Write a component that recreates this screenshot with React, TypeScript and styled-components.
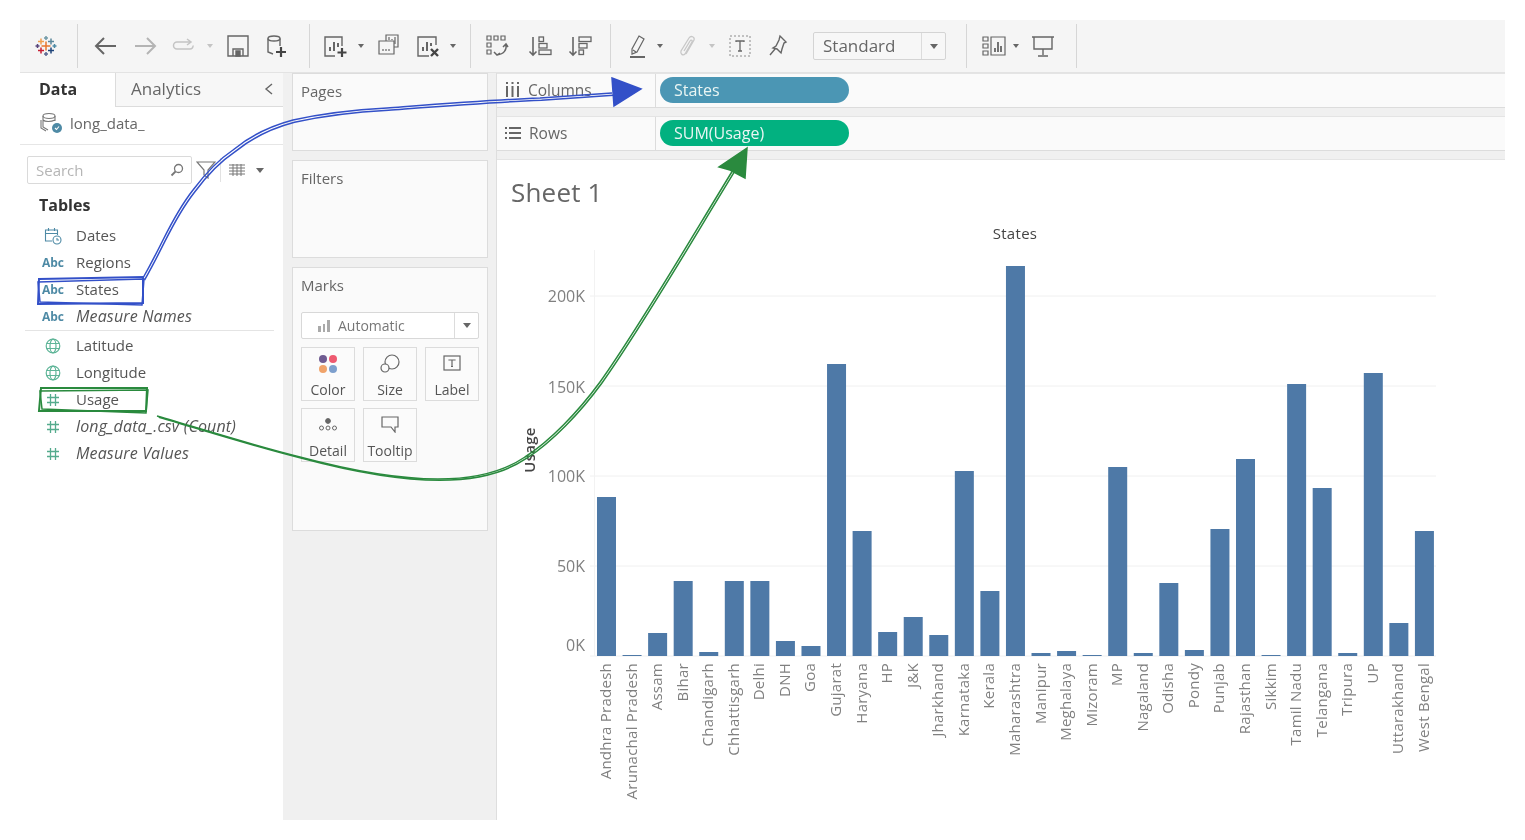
import React from "react";
import styled, { createGlobalStyle } from "styled-components";

const GlobalStyle = createGlobalStyle`
  html, body {
    margin: 0;
    padding: 0;
    background: #ffffff;
    font-family: "Open Sans", "Liberation Sans", sans-serif;
    color: #555555;
  }
`;

const Page = styled.div`
  position: relative;
  width: 1525px;
  height: 840px;
  padding: 20px;
  box-sizing: border-box;
  overflow: hidden;
  filter: blur(0.35px);
`;

const Toolbar = styled.div`
  display: flex;
  align-items: center;
  height: 53px;
  background: #f5f5f5;
  border-bottom: 1px solid #e3e3e3;
  box-sizing: border-box;
`;

const ToolGroup = styled.div<{ $w: number }>`
  display: flex;
  align-items: center;
  width: ${(p) => p.$w}px;
  height: 44px;
  border-right: 1px solid #d6d6d6;
  box-sizing: content-box;
`;

const ToolIcon = styled.svg<{ $ml: number }>`
  flex: none;
  width: 24px;
  height: 24px;
  margin-left: ${(p) => p.$ml}px;
`;

const Caret = styled.span<{ $ml: number; $light?: boolean; $big?: boolean }>`
  flex: none;
  width: 0;
  height: 0;
  margin-left: ${(p) => p.$ml}px;
  border-left: ${(p) => (p.$big ? 4.5 : 3)}px solid transparent;
  border-right: ${(p) => (p.$big ? 4.5 : 3)}px solid transparent;
  border-top: ${(p) => (p.$big ? 5 : 4)}px solid ${(p) => (p.$light ? "#c4c4c4" : "#666666")};
`;

const FitSelect = styled.div`
  display: flex;
  align-items: center;
  width: 133px;
  height: 28px;
  margin-left: 23px;
  background: #f7f7f7;
  border: 1px solid #d4d4d4;
  border-radius: 2px;
  box-sizing: border-box;
  font-size: 17px;
  color: #666666;
`;

const FitLabel = styled.span`
  flex: 1;
  padding: 0 0 2px 9px;
`;

const FitButton = styled.span`
  display: flex;
  align-items: center;
  justify-content: center;
  width: 23px;
  height: 100%;
  border-left: 1px solid #dcdcdc;
`;

const Workspace = styled.div`
  display: grid;
  grid-template-columns: 263px 214px 1fr;
  height: 747px;
`;

const DataPane = styled.div`
  background: #ffffff;
  display: flex;
  flex-direction: column;
`;

const TabRow = styled.div`
  display: flex;
  height: 34px;
`;

const Tab = styled.div<{ $active?: boolean }>`
  display: flex;
  align-items: center;
  box-sizing: border-box;
  padding-bottom: 2px;
  ${(p) =>
    p.$active
      ? `width: 95px; padding-left: 19px; font-size: 16px; font-weight: 700; color: #333333;`
      : `flex: 1; padding-left: 15px; padding-right: 9px; font-size: 17px; justify-content: space-between; background: #f7f7f7; color: #666666; border-left: 1px solid #dcdcdc; border-bottom: 1px solid #dcdcdc;`}
`;

const SourceRow = styled.div`
  display: flex;
  align-items: center;
  gap: 7px;
  height: 38px;
  padding: 0 0 6px 20px;
  box-sizing: border-box;
  font-size: 15px;
  color: #666666;
  border-bottom: 1px solid #e6e6e6;
`;

const SearchRow = styled.div`
  display: flex;
  align-items: center;
  height: 28px;
  margin-top: 11px;
  padding-left: 7px;
`;

const SearchBox = styled.div`
  display: flex;
  align-items: center;
  justify-content: space-between;
  width: 165px;
  height: 28px;
  padding: 0 7px 0 8px;
  border: 1px solid #dadada;
  border-radius: 2px;
  box-sizing: border-box;
  font-size: 15px;
  color: #b5b5b5;
`;

const RowDivider = styled.span`
  width: 1px;
  height: 24px;
  margin-left: 4px;
  background: #e2e2e2;
`;

const TablesTitle = styled.div`
  margin: 8px 0 3px 19px;
  font-size: 16px;
  line-height: 26px;
  font-weight: 700;
  color: #333333;
`;

const FieldList = styled.div`
  display: flex;
  flex-direction: column;
`;

const FieldRow = styled.div`
  display: flex;
  align-items: center;
  height: 27px;
  font-size: 15px;
  color: #555555;
`;

const FieldBadge = styled.span`
  display: flex;
  align-items: center;
  justify-content: center;
  flex: none;
  width: 24px;
  margin: 0 11px 0 21px;
  padding-top: 2px;
  font-size: 12px;
  font-weight: 700;
  color: #4e8aa5;
`;

const FieldName = styled.span<{ $calc?: boolean }>`
  ${(p) => p.$calc && `font-style: italic; font-size: 16px; letter-spacing: 0.15px;`}
`;

const FieldDivider = styled.div`
  height: 1px;
  margin: 1px 9px 0 5px;
  background: #e4e4e4;
`;

const CardColumn = styled.div`
  display: flex;
  flex-direction: column;
  gap: 9px;
  padding: 0 8px 0 9px;
  background: #f0f0f0;
  border-right: 1px solid #dedede;
`;

const Card = styled.div<{ $h: number }>`
  height: ${(p) => p.$h}px;
  padding: 7px 8px 0;
  background: #fafafa;
  border: 1px solid #dcdcdc;
  box-sizing: border-box;
`;

const CardTitle = styled.div`
  font-size: 15px;
  line-height: 20px;
  color: #666666;
`;

const MarkSelect = styled.div`
  display: flex;
  align-items: center;
  height: 27px;
  margin-top: 17px;
  background: #ffffff;
  border: 1px solid #d8d8d8;
  border-radius: 2px;
  box-sizing: border-box;
  font-size: 14px;
  color: #777777;
`;

const MarkSelectLabel = styled.span`
  display: flex;
  align-items: center;
  gap: 7px;
  flex: 1;
  padding-left: 15px;
`;

const MarkGrid = styled.div`
  display: grid;
  grid-template-columns: repeat(3, 54px);
  grid-auto-rows: 54px;
  gap: 7px 8px;
  margin-top: 8px;
`;

const MarkTile = styled.div`
  display: flex;
  flex-direction: column;
  align-items: center;
  justify-content: space-between;
  padding: 6px 0 1px;
  background: #fbfbfb;
  border: 1px solid #dcdcdc;
  box-sizing: border-box;
  font-size: 14px;
  line-height: 18px;
  color: #555555;
`;

const RightColumn = styled.div`
  display: flex;
  flex-direction: column;
  background: #f0f0f0;
`;

const Shelf = styled.div<{ $mt: number }>`
  display: flex;
  align-items: center;
  height: 35px;
  margin-top: ${(p) => p.$mt}px;
  background: #fafafa;
  border-top: 1px solid #e4e4e4;
  border-bottom: 1px solid #dcdcdc;
  box-sizing: border-box;
`;

const ShelfLabel = styled.div`
  display: flex;
  align-items: center;
  gap: 8px;
  width: 159px;
  height: 100%;
  padding: 0 0 2px 8px;
  border-right: 1px solid #dcdcdc;
  box-sizing: border-box;
  font-size: 15.5px;
  color: #666666;
`;

const Pill = styled.div<{ $color: string }>`
  display: flex;
  align-items: center;
  width: 189px;
  height: 26px;
  margin: 0 0 1px 4px;
  padding: 0 0 1px 14px;
  border-radius: 13px;
  box-sizing: border-box;
  background: ${(p) => p.$color};
  font-size: 16px;
  color: #e9f5f3;
`;

const View = styled.div`
  flex: 1;
  margin-top: 8px;
  background: #ffffff;
  border-top: 1px solid #e4e4e4;
  min-height: 0;
`;

const SheetTitle = styled.div`
  height: 54px;
  padding: 13px 0 0 14px;
  box-sizing: border-box;
  font-size: 26px;
  letter-spacing: 0.2px;
  line-height: 38px;
  color: #666666;
`;

const ChartSvg = styled.svg`
  display: block;
  width: 1008px;
  height: 606px;
`;

const AxisText = styled.text`
  font-family: "Open Sans", "Liberation Sans", sans-serif;
  font-size: 15px;
  letter-spacing: 0.25px;
  fill: #808080;
`;

const TickText = styled.text`
  font-family: "Open Sans", "Liberation Sans", sans-serif;
  font-size: 16px;
  fill: #808080;
`;

const HeaderText = styled.text<{ $strong?: boolean }>`
  font-family: "Open Sans", "Liberation Sans", sans-serif;
  font-size: 15px;
  font-weight: ${(p) => (p.$strong ? 600 : 500)};
  letter-spacing: 0.3px;
  fill: #444444;
`;

const Annotation = styled.svg`
  position: absolute;
  left: 0;
  top: 0;
  width: 1525px;
  height: 840px;
  pointer-events: none;
`;

const STATES: [string, number][] = [
  ["Andhra Pradesh", 159], ["Arunachal Pradesh", 1], ["Assam", 23], ["Bihar", 75],
  ["Chandigarh", 4], ["Chhattisgarh", 75], ["Delhi", 75], ["DNH", 15], ["Goa", 10],
  ["Gujarat", 292], ["Haryana", 125], ["HP", 24], ["J&K", 39], ["Jharkhand", 21],
  ["Karnataka", 185], ["Kerala", 65], ["Maharashtra", 390], ["Manipur", 3],
  ["Meghalaya", 5], ["Mizoram", 1], ["MP", 189], ["Nagaland", 3], ["Odisha", 73],
  ["Pondy", 6], ["Punjab", 127], ["Rajasthan", 197], ["Sikkim", 1], ["Tamil Nadu", 272],
  ["Telangana", 168], ["Tripura", 3], ["UP", 283], ["Uttarakhand", 33], ["West Bengal", 125],
];

const TICKS: [string, number, number][] = [
  ["200K", 296, 302],
  ["150K", 386, 393],
  ["100K", 476, 482],
  ["50K", 566, 572],
  ["0K", 656, 651],
];

const g = "#666666";

const Logo = () => {
  const crosses: [number, number, number, string][] = [
    [12, 12, 4.5, "#e8762d"],
    [7, 7.5, 3, "#f0a050"],
    [17, 7.5, 3, "#5b879b"],
    [7, 16.5, 3, "#c72035"],
    [17, 16.5, 3, "#1f447a"],
    [12, 4, 2, "#7099a6"],
    [12, 20, 2, "#5b6591"],
    [3.5, 12, 2, "#59457b"],
    [20.5, 12, 2, "#4e8aa5"],
  ];
  return (
    <ToolIcon $ml={14} viewBox="0 0 24 24">
      {crosses.map(([x, y, r, c], i) => (
        <path key={i} d={`M${x - r} ${y}H${x + r}M${x} ${y - r}V${y + r}`} stroke={c} strokeWidth="1.5" />
      ))}
    </ToolIcon>
  );
};

const Line = ({ ml, d, color = g, w = 1.5 }: { ml: number; d: string; color?: string; w?: number }) => (
  <ToolIcon $ml={ml} viewBox="0 0 24 24" fill="none" stroke={color} strokeWidth={w}>
    <path d={d} />
  </ToolIcon>
);

const NewSheet = () => (
  <ToolIcon $ml={13} viewBox="0 0 24 24" fill="none" stroke={g} strokeWidth="1.4">
    <path d="M19 12V3H2v19h10" />
    <path d="M7 17v-4M11 17V8M15 13V9" strokeWidth="2" />
    <path d="M19 14v9M14.5 18.500h9" stroke="#444" strokeWidth="2.200" />
  </ToolIcon>
);

const ClearSheet = () => (
  <ToolIcon $ml={16} viewBox="0 0 24 24" fill="none" stroke={g} strokeWidth="1.4">
    <path d="M20 11V3H2v19h11" />
    <path d="M7 17v-4M11 17V8M15 12V9" strokeWidth="2" />
    <path d="M15 15l7 7M22 15l-7 7" stroke="#444" strokeWidth="2.400" />
  </ToolIcon>
);

const SortIcon = ({ ml, flip }: { ml: number; flip?: boolean }) => (
  <ToolIcon $ml={ml} viewBox="0 0 24 24" fill="none" stroke={g} strokeWidth="1.3">
    <path d="M5 3v18M1.500 17.500L5 21l3.500-3.500" strokeWidth="1.6" />
    {flip ? (
      <>
        <rect x="11" y="3" width="12" height="4.500" />
        <rect x="11" y="9.500" width="8" height="4.500" />
        <rect x="11" y="16" width="4.500" height="4.500" />
      </>
    ) : (
      <>
        <rect x="11" y="3" width="4.500" height="4.500" />
        <rect x="11" y="9.500" width="8" height="4.500" />
        <rect x="11" y="16" width="12" height="4.500" />
      </>
    )}
  </ToolIcon>
);

const GlobeIcon = () => (
  <svg width="16" height="16" viewBox="0 0 16 16" fill="none" stroke="#5fb598" strokeWidth="1.2">
    <circle cx="8" cy="8" r="6.800" />
    <ellipse cx="8" cy="8" rx="3" ry="6.800" />
    <path d="M1.500 5.500h13M1.500 10.500h13" />
  </svg>
);

const HashIcon = () => (
  <svg width="14" height="14" viewBox="0 0 14 14" fill="none" stroke="#55ab8d" strokeWidth="1.3">
    <path d="M4.500 1v12M9.500 1v12M1 4.500h12M1 9.500h12" />
  </svg>
);

const DateIcon = () => (
  <svg width="18" height="18" viewBox="0 0 18 18" fill="none" stroke="#4e8aa5" strokeWidth="1.100">
    <path d="M8 14H1.500V3h12v5M1.500 6.500h12M4.500 1v3M10.500 1v3" />
    <circle cx="13" cy="13" r="4" />
    <path d="M13 11v2h2" />
  </svg>
);

const fields: { name: string; icon: "date" | "abc" | "globe" | "hash"; calc?: boolean; rule?: boolean }[] = [
  { name: "Dates", icon: "date" },
  { name: "Regions", icon: "abc" },
  { name: "States", icon: "abc" },
  { name: "Measure Names", icon: "abc", calc: true, rule: true },
  { name: "Latitude", icon: "globe" },
  { name: "Longitude", icon: "globe" },
  { name: "Usage", icon: "hash" },
  { name: "long_data_.csv (Count)", icon: "hash", calc: true },
  { name: "Measure Values", icon: "hash", calc: true },
];

const Chart = () => (
  <ChartSvg viewBox="497 214 1008 606">
    {TICKS.map(([, y]) => (
      <line key={y} x1="590" x2="1436" y1={y} y2={y} stroke="#f0f0f0" />
    ))}
    <line x1="594.500" x2="594.500" y1="250" y2="656" stroke="#f2f2f2" />
    {TICKS.map(([label, , y]) => (
      <TickText key={label} x="585" y={y} textAnchor="end">
        {label}
      </TickText>
    ))}
    <HeaderText x="1015" y="239" textAnchor="middle">States</HeaderText>
    <HeaderText $strong transform="translate(535 450) rotate(-90)" textAnchor="middle">Usage</HeaderText>
    {STATES.map(([name, h], i) => {
      const x = 597 + i * 25.56;
      return (
        <g key={name}>
          <rect x={x} y={656 - h} width="19" height={h} fill="#4e79a7" />
          <AxisText transform={`translate(${x + 14} 663) rotate(-90)`} textAnchor="end">
            {name}
          </AxisText>
        </g>
      );
    })}
  </ChartSvg>
);

// the hand-drawn callouts sit over everything else
const Callouts = () => {
  const blue = "M143 278C152 262 158 250 163 240C172 222 182 204 193 190C205 174 218 160 233 150C250 136 270 126 293 120C320 114 350 110 387 108C440 104 490 100 540 98L612 93";
  const green = "M157 416C205 430 255 446 300 457C345 469 395 479 438 479C470 479 500 474 525 457C550 441 578 412 600 382C640 326 690 240 733 170";
  return (
    <Annotation viewBox="0 0 1525 840" fill="none">
      <g stroke="#3350c8" strokeWidth="1.500">
        <path d={blue} />
        <path d={blue} transform="translate(1.500 2.200)" />
        <path d="M39 279L143 277L143 303L38 304Z" strokeWidth="2" />
        <path d="M38 282L144 279L142 305L40 302Z" />
        <path d="M612 78L641 89L614 106Z" fill="#3350c8" />
      </g>
      <g stroke="#2a8a3e" strokeWidth="1.500">
        <path d={green} />
        <path d={green} transform="translate(1.800 1.200)" />
        <path d="M41 388L147 388L146 411L39 411Z" strokeWidth="2" />
        <path d="M40 391L148 390L146 413L42 409Z" />
        <path d="M747 148L719 167L730 170L745 178Z" fill="#2a8a3e" />
      </g>
    </Annotation>
  );
};

export default function App() {
  return (
    <>
      <GlobalStyle />
      <Page>
        <Toolbar>
          <ToolGroup $w={57}>
            <Logo />
          </ToolGroup>
          <ToolGroup $w={231}>
            <Line ml={15} d="M23 12H3M11 4l-8 8 8 8" w={2} />
            <Line ml={17} d="M1 12h20M13 4l8 8-8 8" color="#b4b4b4" w={2} />
            <Line ml={14} d="M18 8H5a3 3 0 0 0 0 7h13a3 3 0 0 0 3-3.500M15 5l4 3-4 3" color="#c4c4c4" />
            <Caret $ml={11} $light />
            <ToolIcon $ml={13} viewBox="0 0 24 24" fill="none" stroke={g} strokeWidth="1.400">
              <path d="M2 2h20v20H2zM7 22v-7h10v7" />
              <path d="M10 17h4v5h-4z" fill={g} />
            </ToolIcon>
            <ToolIcon $ml={14} viewBox="0 0 24 24" fill="none" stroke={g} strokeWidth="1.400">
              <ellipse cx="10" cy="4.500" rx="6" ry="2.500" />
              <path d="M4 4.500V18l5 2M16 4.500V12" />
              <path d="M17 13v10M12 18h10" stroke="#444" strokeWidth="2.200" />
            </ToolIcon>
          </ToolGroup>
          <ToolGroup $w={160}>
            <NewSheet />
            <Caret $ml={11} />
            <ToolIcon $ml={12} viewBox="0 0 24 24" fill="none" stroke={g} strokeWidth="1.200">
              <path d="M10 7V1h12v12h-4" />
              <path d="M3 7h15v13H3z" fill="#f5f5f5" />
              <path d="M13 6V3M16 6V5M19 10V3" />
              <path d="M7 17v-2M10 17v-2M13 17v-2" />
            </ToolIcon>
            <ClearSheet />
            <Caret $ml={10} />
          </ToolGroup>
          <ToolGroup $w={139}>
            <ToolIcon $ml={14} viewBox="0 0 24 24" fill="none" stroke={g} strokeWidth="1.200">
              <path d="M2 2h4v4H2zM9 2h4v4H9zM16 2h4v4h-4zM2 9h4v4H2zM2 16h4v4H2z" />
              <path d="M21 10c1 6-2 10-9 11M9 18l3 3 3-2M18 13l3-3 2 3" strokeWidth="1.500" />
            </ToolIcon>
            <SortIcon ml={19} />
            <SortIcon ml={16} flip />
          </ToolGroup>
          <ToolGroup $w={355}>
            <ToolIcon $ml={15} viewBox="0 0 24 24" fill="none" stroke={g} strokeWidth="1.200">
              <path d="M13 2l5 3-7 13-5 2 0-5zM7 16l3 2" />
              <path d="M4 23h15" strokeWidth="2" />
            </ToolIcon>
            <Caret $ml={7} />
            <ToolIcon $ml={13} viewBox="0 0 24 24" fill="none" stroke="#c8c8c8" strokeWidth="1.300">
              <path d="M10 20l8-14c1-3-3-5-5-2L5 17c-1 3 2 5 4 3l7-12c1-1-1-3-2-1L8 17" />
            </ToolIcon>
            <Caret $ml={9} $light />
            <ToolIcon $ml={13} viewBox="0 0 24 24" fill="none">
              <rect x="2" y="2" width="20" height="20" stroke="#8c8c8c" strokeDasharray="2 2" />
              <path d="M8 8V7h8v1M12 7v10M10 17h4" stroke="#666" strokeWidth="1.300" />
            </ToolIcon>
            <ToolIcon $ml={14} viewBox="0 0 24 24" fill="none" stroke={g} strokeWidth="1.400">
              <path d="M14 2l6 6-2 1-2 6-1 4-4-4-4-1 3-2 3-6zM9 15l-5 6" />
            </ToolIcon>
            <FitSelect>
              <FitLabel>Standard</FitLabel>
              <FitButton>
                <Caret $ml={0} $big />
              </FitButton>
            </FitSelect>
          </ToolGroup>
          <ToolGroup $w={109}>
            <ToolIcon $ml={15} viewBox="0 0 24 24" fill="none" stroke={g} strokeWidth="1.200">
              <path d="M1 3h5v4H1zM1 10h5v4H1zM1 17h5v4H1zM9 3h14v18H9z" />
              <path d="M13 18v-4M16 18V8M19 18v-6" strokeWidth="1.800" />
            </ToolIcon>
            <Caret $ml={7} />
            <ToolIcon $ml={12} viewBox="0 0 24 24" fill="none" stroke={g} strokeWidth="1.400">
              <path d="M1 3h22M3 3v12h18V3M12 15v6M7 22h10" />
            </ToolIcon>
          </ToolGroup>
        </Toolbar>
        <Workspace>
          <DataPane>
            <TabRow>
              <Tab $active>Data</Tab>
              <Tab>
                Analytics
                <svg width="10" height="14" viewBox="0 0 10 14" fill="none" stroke="#666" strokeWidth="1.400">
                  <path d="M8 2L2 7l6 5" />
                </svg>
              </Tab>
            </TabRow>
            <SourceRow>
              <svg width="23" height="22" viewBox="0 0 23 22" fill="none" stroke="#777" strokeWidth="1.100">
                <ellipse cx="9" cy="4" rx="6" ry="2.500" />
                <path d="M3 4v11l5 3M15 4v5M3 8c2 2 8 2 12 0" />
                <path d="M1 8v8l5 3" />
                <circle cx="17" cy="16" r="5" fill="#4e8aa5" stroke="none" />
                <path d="M15 16l1.500 1.500 2.500-3" stroke="#fff" />
              </svg>
              long_data_
            </SourceRow>
            <SearchRow>
              <SearchBox>
                Search
                <svg width="14" height="14" viewBox="0 0 14 14" fill="none" stroke="#777" strokeWidth="1.300">
                  <circle cx="8.500" cy="5.500" r="4" />
                  <path d="M5.500 8.500L1.500 12.500" strokeWidth="1.800" />
                </svg>
              </SearchBox>
              <svg width="20" height="18" viewBox="0 0 20 18" fill="none" stroke="#777" strokeWidth="1.200" style={{ marginLeft: 4 }}>
                <path d="M1 1h18l-7 8v8l-4-3V9z" />
              </svg>
              <RowDivider />
              <svg width="16" height="12" viewBox="0 0 16 12" fill="none" stroke="#777" strokeWidth="1" style={{ marginLeft: 8 }}>
                <path d="M0 1h16M0 4h16M0 7h16M0 10h16M4 0v12M8 0v12M12 0v12" />
              </svg>
              <Caret $ml={11} $big />
            </SearchRow>
            <TablesTitle>Tables</TablesTitle>
            <FieldList>
              {fields.map((f) => (
                <React.Fragment key={f.name}>
                  <FieldRow>
                    <FieldBadge>
                      {f.icon === "abc" && "Abc"}
                      {f.icon === "date" && <DateIcon />}
                      {f.icon === "globe" && <GlobeIcon />}
                      {f.icon === "hash" && <HashIcon />}
                    </FieldBadge>
                    <FieldName $calc={f.calc}>{f.name}</FieldName>
                  </FieldRow>
                  {f.rule && <FieldDivider />}
                </React.Fragment>
              ))}
            </FieldList>
          </DataPane>
          <CardColumn>
            <Card $h={78}>
              <CardTitle>Pages</CardTitle>
            </Card>
            <Card $h={98}>
              <CardTitle>Filters</CardTitle>
            </Card>
            <Card $h={264}>
              <CardTitle>Marks</CardTitle>
              <MarkSelect>
                <MarkSelectLabel>
                  <svg width="14" height="12" viewBox="0 0 14 12" fill="#aaa">
                    <path d="M1 6h3v6H1zM6 4h2v8H6zM10 0h3v12h-3z" />
                  </svg>
                  Automatic
                </MarkSelectLabel>
                <FitButton>
                  <Caret $ml={0} $big />
                </FitButton>
              </MarkSelect>
              <MarkGrid>
                <MarkTile>
                  <svg width="20" height="20" viewBox="0 0 20 20">
                    <circle cx="5" cy="5" r="4" fill="#6f5b91" />
                    <circle cx="15" cy="5" r="4" fill="#ee5a70" />
                    <circle cx="5" cy="15" r="4" fill="#f0a36a" />
                    <circle cx="15" cy="15" r="4" fill="#7d9fcd" />
                  </svg>
                  Color
                </MarkTile>
                <MarkTile>
                  <svg width="20" height="20" viewBox="0 0 20 20" fill="none" stroke="#666" strokeWidth="1.200">
                    <circle cx="12" cy="8" r="7" />
                    <circle cx="5" cy="14" r="4" fill="#fbfbfb" />
                  </svg>
                  Size
                </MarkTile>
                <MarkTile>
                  <svg width="18" height="18" viewBox="0 0 18 18" fill="none" stroke="#666" strokeWidth="1.200">
                    <rect x="1" y="2" width="16" height="14" />
                    <path d="M6 6.500V6h6v.5M9 6v6.500M8 12.500h2" />
                  </svg>
                  Label
                </MarkTile>
                <MarkTile>
                  <svg width="20" height="18" viewBox="0 0 20 18" fill="none" stroke="#666" strokeWidth="1">
                    <circle cx="10" cy="6" r="2.400" fill="#666" />
                    <circle cx="3.500" cy="13" r="2" />
                    <circle cx="10" cy="13" r="2" />
                    <circle cx="16.500" cy="13" r="2" />
                  </svg>
                  Detail
                </MarkTile>
                <MarkTile>
                  <svg width="20" height="18" viewBox="0 0 20 18" fill="none" stroke="#666" strokeWidth="1.200">
                    <path d="M2 2h16v10h-3v5l-4-5H2z" />
                  </svg>
                  Tooltip
                </MarkTile>
              </MarkGrid>
            </Card>
          </CardColumn>
          <RightColumn>
            <Shelf $mt={0}>
              <ShelfLabel>
                <svg width="15" height="15" viewBox="0 0 15 15" fill="none" stroke="#666" strokeWidth="2">
                  <path d="M2 4v11M7.500 4v11M13 4v11M2 0v2M7.500 0v2M13 0v2" />
                </svg>
                Columns
              </ShelfLabel>
              <Pill $color="#4b96b4">States</Pill>
            </Shelf>
            <Shelf $mt={8}>
              <ShelfLabel>
                <svg width="16" height="12" viewBox="0 0 16 12" fill="none" stroke="#666" strokeWidth="2">
                  <path d="M0 1h2M4 1h12M0 6h2M4 6h12M0 11h2M4 11h12" />
                </svg>
                Rows
              </ShelfLabel>
              <Pill $color="#02b180">SUM(Usage)</Pill>
            </Shelf>
            <View>
              <SheetTitle>Sheet 1</SheetTitle>
              <Chart />
            </View>
          </RightColumn>
        </Workspace>
        <Callouts />
      </Page>
    </>
  );
}
